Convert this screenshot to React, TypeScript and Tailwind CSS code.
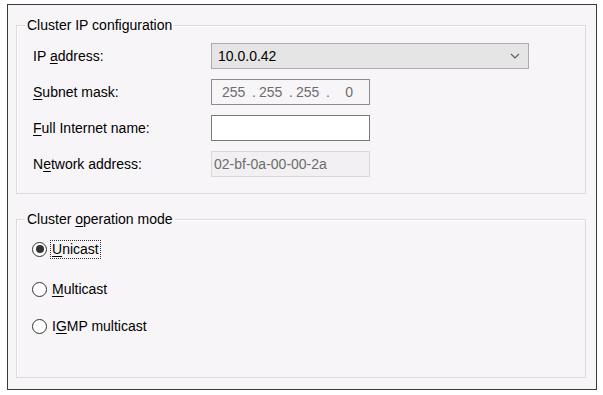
import { ReactNode } from 'react';

function Key({ children }: { children: ReactNode }) {
  return <span className="underline decoration-1 underline-offset-2">{children}</span>;
}

function Row({ label, children }: { label: ReactNode; children: ReactNode }) {
  return (
    <div className="flex h-[26px] items-center">
      <span className="w-[178px] shrink-0">{label}</span>
      {children}
    </div>
  );
}

function Radio({ checked, label, focused }: { checked?: boolean; label: ReactNode; focused?: boolean }) {
  return (
    <div className="flex h-[20px] items-center">
      <span className="flex h-[15px] w-[15px] items-center justify-center rounded-full border border-[#333] bg-white">
        {checked && <span className="h-[8px] w-[8px] rounded-full bg-[#333]" />}
      </span>
      <span className={`ml-[4px] px-[1px] leading-[17px] ${focused ? 'outline-1 outline-dotted outline-[#333]' : ''}`}>{label}</span>
    </div>
  );
}

export default function App() {
  return (
    <div className="min-h-screen bg-white pl-[7px] pt-[4px] text-[14px] text-black" style={{ fontFamily: '"Liberation Sans", Arial, sans-serif' }}>
      <div className="h-[386px] w-[590px] border border-[#3a3a3a] bg-[#f8f5f8] pl-[8px] pr-[10px] pt-[12px]">
        <fieldset className="h-[177px] border border-[#dcd9dc] shadow-[inset_1px_1px_0_#fff]">
          <legend className="ml-[8px] px-[2px] leading-[16px]">Cluster IP configuration</legend>
          <div className="flex flex-col gap-[10px] pl-[16px] pt-[10px]">
            <Row label={<>IP <Key>a</Key>ddress:</>}>
              <div className="flex h-[26px] w-[318px] items-center justify-between border border-[#adadad] bg-[#e5e5e5] pl-[6px] pr-[8px]">
                <span>10.0.0.42</span>
                <svg width="10" height="6" viewBox="0 0 10 6" fill="none" stroke="#5f5f5f" strokeWidth="1.2">
                  <path d="M1 1l4 4 4-4" />
                </svg>
              </div>
            </Row>
            <Row label={<><Key>S</Key>ubnet mask:</>}>
              <div className="flex h-[26px] w-[159px] items-center border border-[#8c8c8c] pl-[10px] text-[#6d6d6d]">
                <span className="w-[27px]">255</span>
                <span className="w-[10px] text-center">.</span>
                <span className="w-[27px]">255</span>
                <span className="w-[10px] text-center">.</span>
                <span className="w-[27px]">255</span>
                <span className="w-[10px] text-center">.</span>
                <span className="w-[20px] text-right">0</span>
              </div>
            </Row>
            <Row label={<><Key>F</Key>ull Internet name:</>}>
              <div className="h-[26px] w-[159px] border border-[#7a7a7a] bg-white" />
            </Row>
            <Row label={<>N<Key>e</Key>twork address:</>}>
              <div className="flex h-[26px] w-[159px] items-center border border-[#d9d7d9] bg-[#f2f0f2] pl-[2px] text-[#6d6d6d]">02-bf-0a-00-00-2a</div>
            </Row>
          </div>
        </fieldset>
        <fieldset className="mt-[16px] h-[168px] border border-[#dcd9dc] shadow-[inset_1px_1px_0_#fff]">
          <legend className="ml-[8px] px-[2px] leading-[18px]">Cluster <Key>o</Key>peration mode</legend>
          <div className="flex flex-col pl-[15px] pt-[11px]">
            <Radio checked focused label={<><Key>U</Key>nicast</>} />
            <div className="mt-[20px]">
              <Radio label={<><Key>M</Key>ulticast</>} />
            </div>
            <div className="mt-[17px]">
              <Radio label={<>I<Key>G</Key>MP multicast</>} />
            </div>
          </div>
        </fieldset>
      </div>
    </div>
  );
}
